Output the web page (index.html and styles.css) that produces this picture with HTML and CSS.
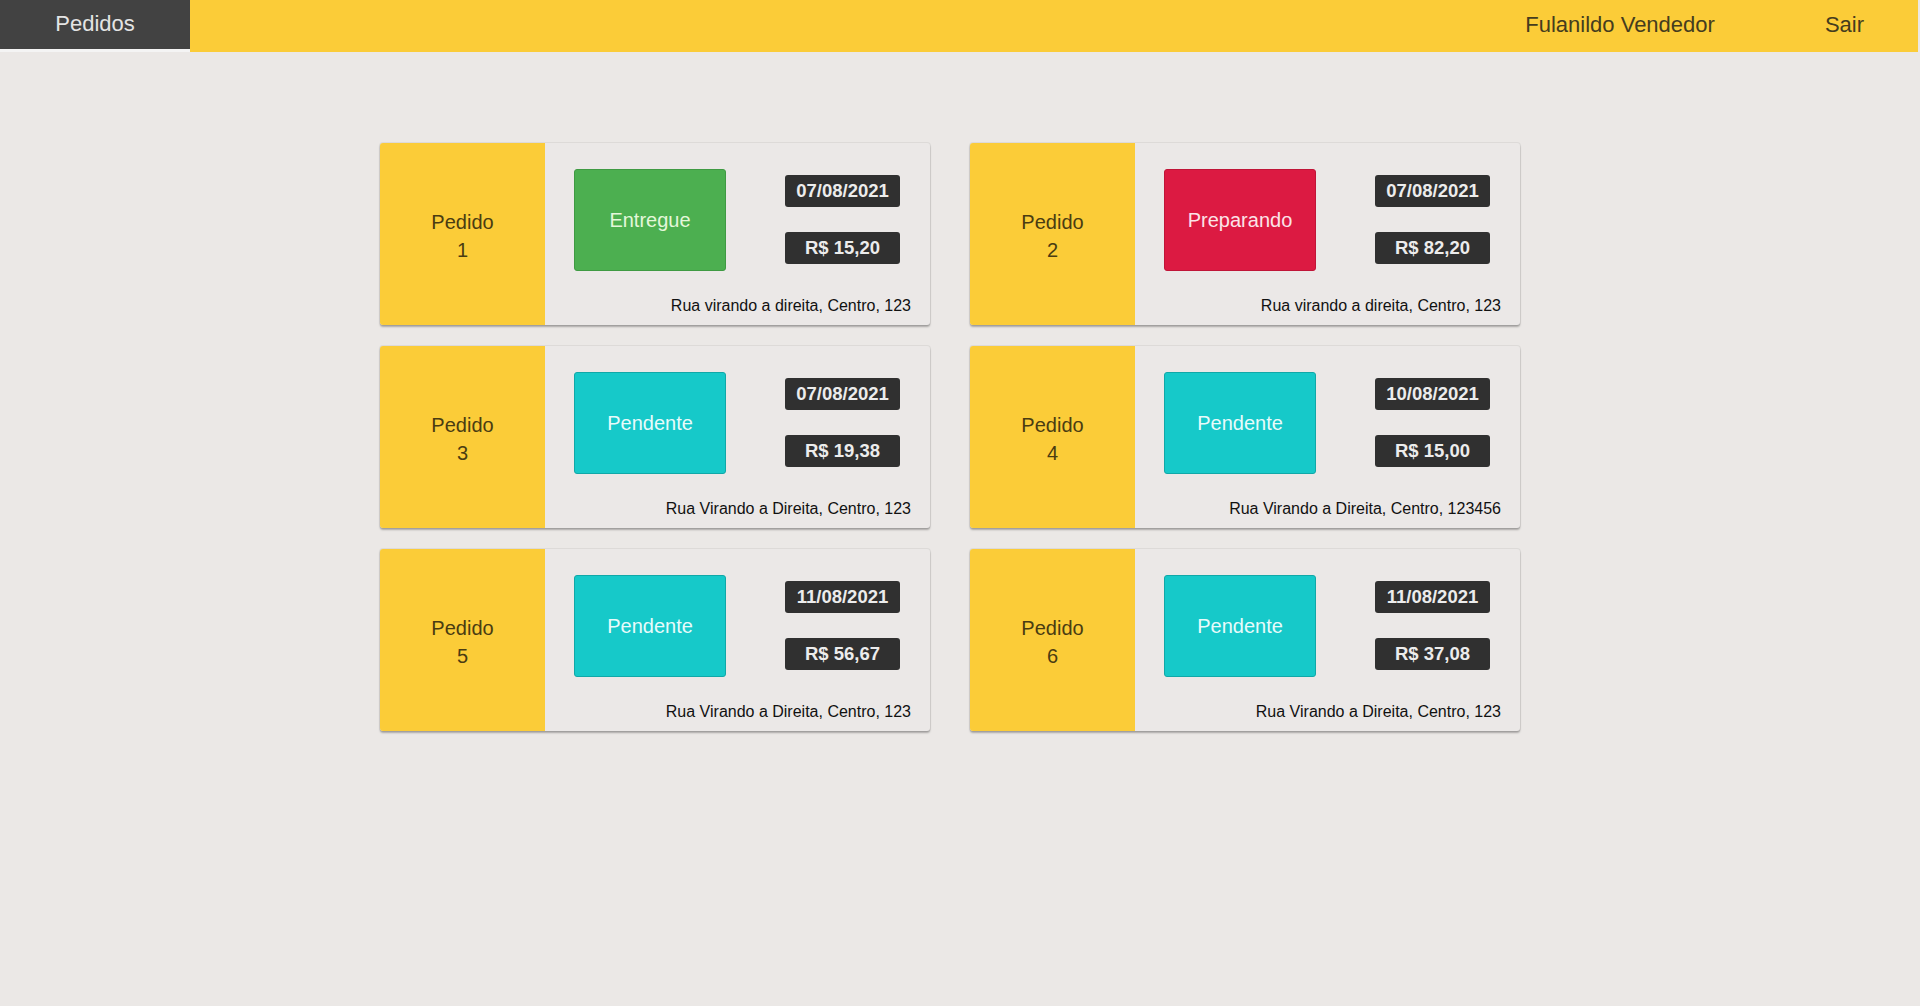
FILE: index.html
```html
<!DOCTYPE html>
<html lang="pt-BR">
<head>
<meta charset="utf-8">
<title>Pedidos</title>
<link rel="stylesheet" href="styles.css">
</head>
<body>
<header class="topbar">
  <a class="tab active">Pedidos</a>
  <div class="spacer"></div>
  <span class="user">Fulanildo Vendedor</span>
  <a class="logout">Sair</a>
</header>
<main class="content">
  <div class="grid">
    <div class="card">
      <div class="card-id">Pedido<br>1</div>
      <div class="card-body">
        <div class="card-top">
          <div class="status entregue">Entregue</div>
          <div class="badges"><span class="badge">07/08/2021</span><span class="badge">R$ 15,20</span></div>
        </div>
        <div class="address">Rua virando a direita, Centro, 123</div>
      </div>
    </div>
    <div class="card">
      <div class="card-id">Pedido<br>2</div>
      <div class="card-body">
        <div class="card-top">
          <div class="status preparando">Preparando</div>
          <div class="badges"><span class="badge">07/08/2021</span><span class="badge">R$ 82,20</span></div>
        </div>
        <div class="address">Rua virando a direita, Centro, 123</div>
      </div>
    </div>
    <div class="card">
      <div class="card-id">Pedido<br>3</div>
      <div class="card-body">
        <div class="card-top">
          <div class="status pendente">Pendente</div>
          <div class="badges"><span class="badge">07/08/2021</span><span class="badge">R$ 19,38</span></div>
        </div>
        <div class="address">Rua Virando a Direita, Centro, 123</div>
      </div>
    </div>
    <div class="card">
      <div class="card-id">Pedido<br>4</div>
      <div class="card-body">
        <div class="card-top">
          <div class="status pendente">Pendente</div>
          <div class="badges"><span class="badge">10/08/2021</span><span class="badge">R$ 15,00</span></div>
        </div>
        <div class="address">Rua Virando a Direita, Centro, 123456</div>
      </div>
    </div>
    <div class="card">
      <div class="card-id">Pedido<br>5</div>
      <div class="card-body">
        <div class="card-top">
          <div class="status pendente">Pendente</div>
          <div class="badges"><span class="badge">11/08/2021</span><span class="badge">R$ 56,67</span></div>
        </div>
        <div class="address">Rua Virando a Direita, Centro, 123</div>
      </div>
    </div>
    <div class="card">
      <div class="card-id">Pedido<br>6</div>
      <div class="card-body">
        <div class="card-top">
          <div class="status pendente">Pendente</div>
          <div class="badges"><span class="badge">11/08/2021</span><span class="badge">R$ 37,08</span></div>
        </div>
        <div class="address">Rua Virando a Direita, Centro, 123</div>
      </div>
    </div>
  </div>
</main>
</body>
</html>
```

FILE: styles.css
```css
* { box-sizing: border-box; }

html, body {
  margin: 0;
  padding: 0;
  height: 100%;
}

body {
  background: #ebe8e6;
  font-family: "Liberation Sans", Arial, sans-serif;
  color: #222;
}

.topbar {
  display: flex;
  align-items: stretch;
  height: 52px;
  width: calc(100% - 2px);
  background: #fbcc38;
}

.tab {
  width: 190px;
  display: flex;
  align-items: center;
  justify-content: center;
  font-size: 22px;
  color: #e4e4e4;
  background: #424242;
  border-bottom: 3px solid #f4f4f4;
  padding-bottom: 1px;
}

.spacer { flex: 1; }

.user,
.logout {
  display: flex;
  align-items: center;
  font-size: 22px;
  color: #453c1e;
  padding-bottom: 3px;
}

.user {
  padding-right: 110px;
}

.logout {
  padding-right: 54px;
}

.content {
  padding: 91px 20px 0 0;
}

.grid {
  width: 1140px;
  margin: 0 auto;
  display: grid;
  grid-template-columns: 550px 550px;
  column-gap: 40px;
  row-gap: 21px;
}

.card {
  display: flex;
  height: 182px;
  background: #ebe8e7;
  border-radius: 3px;
  overflow: hidden;
  box-shadow: 0 0 0 1px rgba(0, 0, 0, 0.06), 0 2px 2px rgba(0, 0, 0, 0.28);
}

.card-id {
  width: 165px;
  flex: none;
  background: #fbcc38;
  display: flex;
  align-items: center;
  justify-content: center;
  text-align: center;
  font-size: 20px;
  line-height: 28px;
  color: #4a3c12;
  padding-top: 4px;
}

.card-body {
  flex: 1;
  display: flex;
  flex-direction: column;
  padding: 26px 30px 0 29px;
}

.card-top {
  display: flex;
  justify-content: space-between;
  align-items: flex-start;
}

.status {
  width: 152px;
  height: 102px;
  border-radius: 3px;
  display: flex;
  align-items: center;
  justify-content: center;
  font-size: 20px;
  color: #f3f3f3;
}

.entregue {
  background: #4caf50;
  border: 1px solid #3f9a43;
  color: #e4f7da;
}

.preparando {
  background: #dc1a42;
  border: 1px solid #c01538;
  color: #fbe3e8;
}

.pendente {
  background: #16c9c9;
  border: 1px solid #10a8a8;
  color: #e8fbfb;
}

.badges {
  display: flex;
  flex-direction: column;
  gap: 25px;
  padding-top: 6px;
}

.badge {
  width: 115px;
  height: 32px;
  border-radius: 3px;
  background: #303030;
  color: #ececec;
  font-weight: bold;
  font-size: 18.5px;
  display: flex;
  align-items: center;
  justify-content: center;
}

.address {
  margin-top: 25px;
  margin-right: -11px;
  text-align: right;
  font-size: 16px;
  line-height: 20px;
  color: #111;
}
```
